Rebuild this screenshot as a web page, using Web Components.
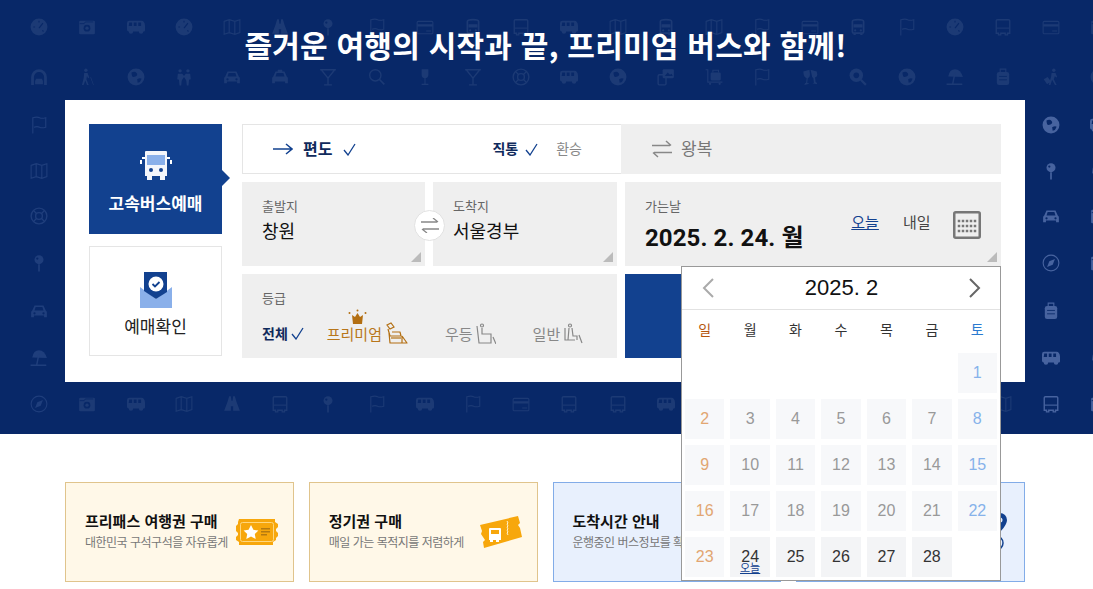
<!DOCTYPE html>
<html lang="ko">
<head>
<meta charset="utf-8">
<title>고속버스 예매</title>
<style>
  html, body { margin: 0; height: 589px; overflow: hidden; background: #fff; }
  body { font-family: "Noto Sans CJK KR", "Noto Sans", sans-serif; color: #111; }
</style>
</head>
<body>
<hero-band>
  <span slot="title">즐거운 여행의 시작과 끝, 프리미엄 버스와 함께!</span>
  <booking-panel>
    <side-tab slot="side" active label="고속버스예매">
      <svg width="34" height="30" viewBox="0 0 34 30"><path d="M1 9h2V6h3v2H3v5H1zM33 9h-2V6h-3v2h3v5h2z" fill="#fff"/><path d="M6 1q0-1 1-1h20q1 0 1 1v24h-2v4h-5v-4H13v4H8v-4H6z" fill="#f4f6fb"/><rect x="8" y="4" width="18" height="10" fill="#8ab0ea"/><circle cx="12" cy="19" r="2" fill="#12418f"/><circle cx="22" cy="19" r="2" fill="#12418f"/></svg>
    </side-tab>
    <side-tab slot="side" label="예매확인">
      <svg width="32" height="36" viewBox="0 0 32 36"><path d="M0 15l16 12 16-12v21H0z" fill="#8ab0ea"/><path d="M4 0h23v20L16 27 4 19z" fill="#12418f"/><circle cx="16" cy="12" r="7.5" fill="#fff"/><path d="M12.500 12l2.500 2.500 4.500-4.500" fill="none" stroke="#12418f" stroke-width="1.800"/></svg>
    </side-tab>
    <trip-bar slot="trip"></trip-bar>
    <place-field slot="from" label="출발지" value="창원"></place-field>
    <place-field slot="to" label="도착지" value="서울경부" swap></place-field>
    <date-field slot="date"></date-field>
    <grade-field slot="grade"></grade-field>
    <cal-popup slot="popup"></cal-popup>
  </booking-panel>
</hero-band>
<promo-strip>
  <promo-card tone="gold" heading="프리패스 여행권 구매" note="대한민국 구석구석을 자유롭게">
    <svg width="42" height="26" viewBox="0 0 42 26"><path d="M3 0h36v3l3 2v3l-2 2v2l2 2v3l-2 2v2l-3 2v3H3v-3l-3-2v-3l2-2v-2l-2-2V7l2-2V3z" fill="#f7a70c"/><rect x="4.500" y="3.500" width="33" height="19" rx="2" fill="none" stroke="#ffd77e"/><path d="M15 6l2.400 4.800 5 .7-3.600 3.500.9 5-4.700-2.500L10.300 20l.9-5-3.600-3.500 5-.7z" fill="#fff"/><path d="M25 9h9v1.500h-9zM25 12h9v1.500h-9zM25 15h6v1.500h-6z" fill="#b57a10"/></svg>
  </promo-card>
  <promo-card tone="gold" heading="정기권 구매" note="매일 가는 목적지를 저렴하게">
    <svg width="42" height="32" viewBox="0 0 42 32"><path d="M0 9L38 0l2 7-2 2 2 3 2 9L4 32l-1-6 2-2-2-3-2-3 1-3z" fill="#f7a70c"/><path d="M27 5l1 2-1 1 1 2-1 1 1 2-1 1 1 2-1 1 1 2" fill="none" stroke="#fff3cf"/><path d="M9 13q0-1 1-1h10q1 0 1 1v11h-2v2h-3v-2h-3v2h-3v-2H9z" fill="#fff"/><rect x="11" y="14" width="8" height="4" fill="#f7a70c"/></svg>
  </promo-card>
  <promo-card tone="blue" heading="도착시간 안내" note="운행중인 버스정보를 확인하세요"></promo-card>
  <promo-card tone="blue">
    <svg width="24" height="40" viewBox="0 0 24 40"><path d="M15 1a7 7 0 0 1 7 7c0 5-7 12-7 12s-7-7-7-12a7 7 0 0 1 7-7z" fill="#12418f"/><circle cx="15" cy="8" r="2.500" fill="#e8f0fd"/><circle cx="11" cy="31" r="7" fill="none" stroke="#12418f" stroke-width="1.500"/></svg>
  </promo-card>
</promo-strip>

<script>
const KR = '"Noto Sans CJK KR", "Noto Sans", sans-serif';
const NAVY = '#082868';

// base: fills an open shadow root from a string
class Piece extends HTMLElement {
  constructor() {
    super();
    this.attachShadow( {mode: 'open'} );
  }
  fill( html ) {
    const template = document.createElement( 'template' );
    template.innerHTML = html;
    this.shadowRoot.appendChild( template.content.cloneNode( true ) );
  }
}

// Background pictograms, 32x32
const ICONS = {
  gauge: `<circle cx="16" cy="16" r="15"/><path d="M16 18l7-9M6 16h3M16 5v3M24 24l-2-2" stroke="${NAVY}" stroke-width="2" fill="none"/>`,
  camera: `<path d="M4 5h24q2 0 2 2v20q0 2-2 2H4q-2 0-2-2V7q0-2 2-2z"/><circle cx="16" cy="18" r="6" fill="${NAVY}"/><circle cx="16" cy="18" r="3"/><path d="M3 10h8l2-3h14" stroke="${NAVY}" stroke-width="1.500" fill="none"/>`,
  van: `<path d="M4 5h22q5 0 6 8v9q0 2-2 2h-1a4 4 0 0 1-8 0H11a4 4 0 0 1-8 0q-3 0-3-3V9q0-4 4-4z"/><path d="M4 8h5v6H3zM12 8h5v6h-5zM20 8h5v6h-5z" fill="${NAVY}"/>`,
  map: `<path d="M2 6l9-3 10 3 9-3v23l-9 3-10-3-9 3zM11 3v23M21 6v23" fill="none" stroke="currentColor" stroke-width="2"/>`,
  binoculars: `<path d="M11 2h3l1 8h2l1-8h3l3 10 6 16H18v-8h-4v8H2l6-16z"/>`,
  pin: `<circle cx="16" cy="10" r="8"/><path d="M14.500 18h3v13h-3z"/><circle cx="13" cy="8" r="2" fill="${NAVY}"/>`,
  flag: `<path d="M5 31V3q8-2 12 0t11 0v17q-7 2-11 0t-10 0" fill="none" stroke="currentColor" stroke-width="2"/>`,
  card: `<rect x="2" y="6" width="28" height="22" rx="2" fill="none" stroke="currentColor" stroke-width="2"/><path d="M2 11h28v4H2zM18 22h9v2h-9z"/>`,
  trainbus: `<path d="M6 6q0-3 10-3t10 3v18q0 3-3 3H9q-3 0-3-3z" fill="none" stroke="currentColor" stroke-width="3"/><path d="M8 11h16v6H8zM8 27h4v3H8zM20 27h4v3h-4z"/><circle cx="11" cy="22" r="2"/><circle cx="21" cy="22" r="2"/>`,
  bus: `<path d="M6 3h20q2 0 2 2v22h-4v3h-4v-3h-8v3H8v-3H4V5q0-2 2-2z" fill="none" stroke="currentColor" stroke-width="2.500"/><path d="M4 17h24v2H4z"/>`,
  car: `<path d="M8 6h16l4 9q2 1 2 3v9h-5v-3H7v3H2v-9q0-2 2-3z"/><path d="M10 9h12l2 6H8z" fill="${NAVY}"/><circle cx="8" cy="20" r="2" fill="${NAVY}"/><circle cx="24" cy="20" r="2" fill="${NAVY}"/>`,
  taxi: `<path d="M12 3h8v3h4l4 9q2 1 2 3v9h-5v-3H7v3H2v-9q0-2 2-3l4-9h4z"/><path d="M10 9h12l2 6H8z" fill="${NAVY}"/>`,
  tunnel: `<path d="M2 30V16a14 14 0 0 1 28 0v14h-5V16a9 9 0 0 0-18 0v14z"/><path d="M11 19h10l2 4v6H9v-6z"/>`,
  walker: `<circle cx="14" cy="4" r="3"/><path d="M11 9h6l3 8-2 1-2-4-1 6 4 10h-3l-3-8-3 8H7l3-12zM23 16l5 14h-1l-5-13z"/>`,
  globe: `<circle cx="16" cy="16" r="15"/><path d="M8 8q6-3 9 1t-2 6-6-1-1-6zM18 20q5-3 8-1l-3 6-4 1z" fill="${NAVY}"/>`,
  people: `<circle cx="9" cy="5" r="3"/><circle cx="23" cy="5" r="3"/><path d="M5 10h8l3 4 3-4h8l1 10-3 1-1 10h-3l-1-9-4-6-4 6-1 9H8L7 21l-3-1z"/>`,
  martini: `<path d="M2 3h28M4 3l12 15L28 3M16 18v11M9 30h14" fill="none" stroke="currentColor" stroke-width="2.500"/>`,
  search: `<circle cx="13" cy="13" r="10" fill="none" stroke="currentColor" stroke-width="2.500"/><path d="M20 20l9 9" stroke="currentColor" stroke-width="3"/>`,
  wine: `<path d="M10 2h12v10a6 6 0 0 1-12 0zM15 18h2v10h5v2H10v-2h5z"/>`,
  buoy: `<circle cx="16" cy="16" r="14" fill="none" stroke="currentColor" stroke-width="2.500"/><circle cx="16" cy="16" r="6" fill="none" stroke="currentColor" stroke-width="2.500"/><path d="M6 6l6 6M26 6l-6 6M6 26l6-6M26 26l-6-6" stroke="currentColor" stroke-width="2.500"/>`,
  photos: `<rect x="10" y="2" width="20" height="16" rx="2"/><rect x="2" y="12" width="14" height="18" rx="2" fill="none" stroke="currentColor" stroke-width="2.500"/><path d="M14 14l5-6 4 4 3-2 2 4z" fill="${NAVY}"/>`,
  cart: `<path d="M1 3h4v22h26" fill="none" stroke="currentColor" stroke-width="2"/><rect x="10" y="8" width="18" height="14" rx="2"/><path d="M14 8V4h10v4" fill="none" stroke="currentColor" stroke-width="2"/><circle cx="9" cy="28" r="2"/><circle cx="26" cy="28" r="2"/>`,
  cheers: `<path d="M4 6l11-3 1 9q0 5-4 6l-1 8 4 2-9 2 1-3 2-1 1-8q-4-1-5-5zM28 6L17 3l2 9q0 5 3 6l1 8-3 1 9 2-1-3-2-1-1-8q4-1 4-5z"/>`,
  zoom: `<circle cx="13" cy="13" r="12"/><circle cx="13" cy="13" r="5" fill="${NAVY}"/><path d="M21 21l9 9" stroke="currentColor" stroke-width="4"/>`,
  umbrella: `<path d="M4 15Q6 2 16 2t14 14z"/><path d="M16 8l-4 20M1 29h28" stroke="currentColor" stroke-width="2.500" fill="none"/>`,
  luggage: `<path d="M11 7V2h10v5" fill="none" stroke="currentColor" stroke-width="2"/><rect x="5" y="7" width="22" height="23" rx="4"/><path d="M9 15h14M9 21h14" stroke="${NAVY}" stroke-width="1.500"/>`,
  traveler: `<circle cx="21" cy="4" r="3"/><path d="M17 9h7l3 7-2 1-2-3-2 6 5 10h-3l-5-9-3 9h-3l4-14zM3 20l7-4 6 8-7 5z"/>`,
  compass: `<circle cx="16" cy="16" r="14" fill="none" stroke="currentColor" stroke-width="2"/><path d="M23 9l-4 10-10 4 4-10z"/>`
};

const PATTERN = [
  [ 'globe', 'gauge', 'camera', 'van', 'gauge', 'map', 'binoculars', 'pin', 'flag', 'card', 'trainbus', 'bus', 'van', 'map', 'trainbus', 'map', 'flag', 'card', 'trainbus', 'flag', 'gauge', 'bus', 'card', 'camera' ],
  [ 'van', 'tunnel', 'walker', 'globe', 'people', 'car', 'taxi', 'martini', 'search', 'wine', 'martini', 'buoy', 'van', 'globe', 'photos', 'cart', 'flag', 'cheers', 'zoom', 'globe', 'umbrella', 'luggage', 'traveler', 'globe' ]
];
const EDGES = [
  [ 'compass', 'flag', 'globe', 'van' ],
  [ 'card', 'map', 'pin', 'people' ],
  [ 'buoy', 'buoy', 'car', 'camera' ],
  [ 'pin', 'pin', 'compass', 'camera' ],
  [ 'car', 'car', 'luggage', 'walker' ],
  [ 'bus', 'umbrella', 'van', 'people' ],
  [ 'map', 'compass', 'bus', 'camera' ]
];
const BOTTOM = { 2: 'camera', 3: 'van', 4: 'map', 5: 'binoculars', 6: 'bus', 7: 'pin', 8: 'flag', 9: 'van', 10: 'flag', 11: 'card', 12: 'bus', 13: 'bus', 14: 'van', 21: 'map' };

class HeroPattern extends Piece {
  connectedCallback() {
    let cells = '';
    const put = ( name, row, col, color ) => {
      cells += `<svg style="grid-row:${row + 1};grid-column:${col + 1};color:${color}" viewBox="0 0 32 32" fill="currentColor">${ICONS[name]}</svg>`;
    };
    const FAINT = '#1c3a75';
    const BRIGHT = '#47639f';
    PATTERN.forEach( ( line, row ) => line.forEach( ( name, col ) => put( name, row, col, FAINT ) ) );
    EDGES.forEach( ( [near, left, right, far], i ) => {
      const row = i + 2;
      put( near, row, 0, FAINT );
      put( left, row, 1, '#1f3e7c' );
      put( right, row, 22, BRIGHT );
      put( far, row, 23, BRIGHT );
    } );
    Object.keys( BOTTOM ).forEach( ( col ) => put( BOTTOM[col], 8, +col, FAINT ) );
    this.fill( `
      <style>
        :host { display: block; position: absolute; inset: 0; overflow: hidden; }
        .grid {
          display: grid;
          grid-template-columns: repeat( 25, 48.2px );
          grid-template-rows: 50px 50px 46px 45px 46px 48px 48px 46px 46px;
          margin: 2px 0 0 -33px;
          place-items: center;
        }
        svg { display: block; height: 18px; width: 18px; }
      </style>
      <div class="grid">${cells}</div>
    ` );
  }
}

class HeroBand extends Piece {
  constructor() {
    super();
    this.fill( `
      <style>
        :host { background: ${NAVY}; display: block; height: 434px; position: relative; }
        h1 {
          align-items: center;
          color: #fff;
          display: flex;
          font-family: ${KR};
          font-size: 30px;
          font-weight: 700;
          height: 88px;
          justify-content: center;
          letter-spacing: 0.24px;
          margin: 0 2px 2px 0;
          position: relative;
          white-space: nowrap;
        }
        .wrap { padding: 10px 68px 0 65px; position: relative; }
      </style>
      <hero-pattern></hero-pattern>
      <h1><slot name="title"></slot></h1>
      <div class="wrap"><slot></slot></div>
    ` );
  }
}

class BookingPanel extends Piece {
  constructor() {
    super();
    this.fill( `
      <style>
        :host {
          background: #fff;
          box-sizing: border-box;
          display: flex;
          gap: 20px;
          height: 282px;
          padding: 24px;
          position: relative;
          width: 960px;
          z-index: 2;
        }
        .side { display: flex; flex: none; flex-direction: column; gap: 12px; width: 133px; }
        .main {
          display: grid;
          flex: 1;
          gap: 8px;
          grid-template-columns: 183px 184px 376px;
          grid-template-rows: 50px 84px 84px;
        }
        .trip { grid-column: 1 / 4; }
        .grade { grid-column: 1 / 3; }
        .go { background: #12418f; }
        ::slotted( cal-popup ) { left: 616px; position: absolute; top: 166px; z-index: 5; }
      </style>
      <div class="side"><slot name="side"></slot></div>
      <div class="main">
        <div class="trip"><slot name="trip"></slot></div>
        <div><slot name="from"></slot></div>
        <div><slot name="to"></slot></div>
        <div><slot name="date"></slot></div>
        <div class="grade"><slot name="grade"></slot></div>
        <div class="go"></div>
      </div>
      <slot name="popup"></slot>
    ` );
  }
}

class SideTab extends Piece {
  connectedCallback() {
    this.fill( `
      <style>
        :host {
          align-items: center;
          border: 1px solid #e5e5e5;
          box-sizing: border-box;
          color: #222;
          display: flex;
          flex-direction: column;
          font-family: ${KR};
          font-size: 17px;
          height: 110px;
          justify-content: center;
          padding-top: 7px;
          position: relative;
          width: 133px;
        }
        :host( [active] ) { background: #12418f; border-color: #12418f; color: #fff; font-weight: 700; }
        :host( [active] )::after {
          border-bottom: 8px solid transparent;
          border-left: 8px solid #12418f;
          border-top: 8px solid transparent;
          content: '';
          left: 132px;
          position: absolute;
          top: 45px;
        }
        span { line-height: 22px; margin-top: 7px; }
        :host( [active] ) span { margin-top: 11px; }
        ::slotted( svg ) { display: block; }
      </style>
      <slot></slot>
      <span>${this.getAttribute( 'label' )}</span>
    ` );
  }
}

const TICK = ( color, w = 13 ) => `<svg width="${w}" height="${w}" viewBox="0 0 13 13"><path d="M1 7l4 5 7-11" fill="none" stroke="${color}" stroke-width="1.300"/></svg>`;

class TripBar extends Piece {
  constructor() {
    super();
    this.fill( `
      <style>
        :host { display: flex; font-family: ${KR}; height: 50px; }
        .one {
          align-items: center;
          border: 1px solid #e5e5e5;
          border-right: none;
          box-sizing: border-box;
          display: flex;
          padding-left: 30px;
          width: 379px;
        }
        .one > b { color: #0f2a5c; font-size: 16px; margin: 0 11px 3px 10px; }
        .kinds { align-items: center; display: flex; font-size: 14px; margin-left: auto; padding-right: 39px; }
        .kinds b { color: #0f2a5c; margin: 0 7px 2px 1px; }
        .kinds span { color: #888; margin: 0 0 2px 18px; }
        .two { align-items: center; background: #efefef; color: #777; display: flex; flex: 1; font-size: 17px; gap: 9px; padding-left: 31px; }
        .two span { margin-bottom: 3px; }
        svg { display: block; }
      </style>
      <div class="one">
        <svg width="20" height="12" viewBox="0 0 20 12"><path d="M0 6h18M13 1l6 5-6 5" fill="none" stroke="#12418f" stroke-width="1.500"/></svg>
        <b>편도</b>${TICK( '#12418f' )}
        <div class="kinds"><b>직통</b>${TICK( '#12418f' )}<span>환승</span></div>
      </div>
      <div class="two">
        <svg width="20" height="18" viewBox="0 0 20 18"><path d="M0 5.500h18M14 1l5 4.500M20 12.500H2M6 17l-5-4.500" fill="none" stroke="#888" stroke-width="1.500"/></svg>
        <span>왕복</span>
      </div>
    ` );
  }
}

const CORNER = `
  .corner {
    border-bottom: 10px solid #bbb;
    border-left: 10px solid transparent;
    bottom: 4px;
    position: absolute;
    right: 4px;
  }
`;

class PlaceField extends Piece {
  connectedCallback() {
    const swap = this.hasAttribute( 'swap' ) ? `
      <div class="swap"><svg width="18" height="15" viewBox="0 0 18 15"><path d="M0 4h16M12 0l5 4M18 11H2M6 15l-5-4" fill="none" stroke="#888" stroke-width="1.300"/></svg></div>` : '';
    this.fill( `
      <style>
        :host {
          background: #efefef;
          box-sizing: border-box;
          display: flex;
          flex-direction: column;
          font-family: ${KR};
          height: 84px;
          padding: 15px 20px 0;
          position: relative;
        }
        small { color: #666; font-size: 13px; line-height: 18px; }
        strong { color: #111; font-size: 18px; font-weight: 400; line-height: 28px; margin-top: 1px; }
        ${CORNER}
        .swap {
          align-items: center;
          background: #fff;
          border: 1px solid #e2e2e2;
          border-radius: 50%;
          box-sizing: border-box;
          display: flex;
          height: 31px;
          justify-content: center;
          left: -19px;
          position: absolute;
          top: 28px;
          width: 31px;
        }
      </style>
      <small>${this.getAttribute( 'label' )}</small>
      <strong>${this.getAttribute( 'value' )}</strong>
      <div class="corner"></div>${swap}
    ` );
  }
}

class DateField extends Piece {
  constructor() {
    super();
    let dots = '';
    for( let y = 10; y <= 20; y += 5 ) {
      for( let x = 6; x <= 22; x += 4 ) {
        dots += `<rect x="${x - 1.25}" y="${y - 1.25}" width="2.5" height="2.5"/>`;
      }
    }
    this.fill( `
      <style>
        :host {
          background: #efefef;
          box-sizing: border-box;
          display: flex;
          font-family: ${KR};
          height: 84px;
          padding: 15px 20px 0;
          position: relative;
        }
        .now { display: flex; flex-direction: column; }
        small { color: #666; font-size: 13px; line-height: 18px; }
        strong { color: #111; font-family: Roboto, ${KR}; font-size: 24px; font-weight: 700; letter-spacing: 0.1px; line-height: 34px; margin-top: 6px; white-space: nowrap; }
        .links { align-items: center; display: flex; font-size: 15px; margin-left: auto; padding: 0 0 14px; }
        u { color: #12418f; margin: 0 24px 7px 0; }
        span { color: #444; margin: 0 22.5px 7px 0; }
        svg { display: block; }
        ${CORNER}
      </style>
      <div class="now"><small>가는날</small><strong>2025. 2. 24. 월</strong></div>
      <div class="links">
        <u>오늘</u><span>내일</span>
        <svg width="28" height="28" viewBox="0 0 28 28" fill="#777"><rect x="1.250" y="1.250" width="25.500" height="25.500" rx="1.500" fill="none" stroke="#777" stroke-width="2.500"/>${dots}</svg>
      </div>
      <div class="corner"></div>
    ` );
  }
}

class GradeField extends Piece {
  constructor() {
    super();
    const GOLD = '#b36f12';
    const GRAY = '#888';
    const line = ( color ) => `fill="none" stroke="${color}" stroke-width="1.200"`;
    const premium = `<svg width="22" height="22" viewBox="0 0 22 22"><path d="M1 3l4-2 3 4-4 2z" ${line( GOLD )}/><path d="M2 7l2 7h11l-1-4H6M3 11l1 10h12v-7M16 14l5 7h-5" ${line( GOLD )} stroke-linejoin="round"/><path d="M5 16h10" ${line( GOLD )}/></svg>`;
    const better = `<svg width="20" height="21" viewBox="0 0 20 21"><circle cx="6" cy="2.500" r="1.500" ${line( GRAY )}/><path d="M1 3l2 17h12v-9H6V5M17 14l3 7" ${line( GRAY )}/></svg>`;
    const basic = `<svg width="19" height="21" viewBox="0 0 19 21"><circle cx="6" cy="2.500" r="1.500" ${line( GRAY )}/><path d="M1 5v12h10M5 5l-1 12M8 5l1 8h4v4M15 12l3 8" ${line( GRAY )}/></svg>`;
    this.fill( `
      <style>
        :host {
          background: #efefef;
          box-sizing: border-box;
          display: flex;
          flex-direction: column;
          font-family: ${KR};
          height: 84px;
          padding: 15px 20px 0;
        }
        small { color: #666; font-size: 13px; line-height: 18px; }
        .list { align-items: center; display: flex; font-size: 15px; height: 26px; margin-top: 13px; white-space: nowrap; }
        .item { align-items: center; display: flex; gap: 3px; position: relative; }
        b { color: #0f2a5c; font-size: 14px; }
        .all { margin-right: 23px; }
        .top { color: #b8761a; gap: 4px; margin-right: 37px; }
        .mid { color: #888; margin-right: 37px; }
        .low { color: #888; gap: 4px; }
        .crown { left: 21px; position: absolute; top: -13px; }
        svg { display: block; }
      </style>
      <small>등급</small>
      <div class="list">
        <div class="item all"><b>전체</b>${TICK( '#12418f' )}</div>
        <div class="item top">
          <svg class="crown" width="19" height="15" viewBox="0 0 19 15" fill="${GOLD}"><path d="M4 6l3 2 2.500-4 2.500 4 3-2-1 9H5z"/><circle cx="9.500" cy="1.500" r="1"/><circle cx="1.500" cy="4" r="1"/><circle cx="17.500" cy="4" r="1"/></svg>
          <span>프리미엄</span>${premium}
        </div>
        <div class="item mid"><span>우등</span>${better}</div>
        <div class="item low"><span>일반</span>${basic}</div>
      </div>
    ` );
  }
}

class CalPopup extends Piece {
  constructor() {
    super();
    const names = [ '일', '월', '화', '수', '목', '금', '토' ];
    const heads = names.map( ( n, i ) => `<div class="head d${i}">${n}</div>` ).join( '' );
    let days = '<i></i>'.repeat( 6 );
    for( let day = 1; day <= 28; day++ ) {
      const dow = ( day + 5 ) % 7;
      const kind = day >= 24 ? 'open' : dow === 0 ? 'sun' : dow === 6 ? 'sat' : 'past';
      const tag = day === 24 ? '<u>오늘</u>' : '';
      days += `<div class="day ${kind}">${day}${tag}</div>`;
    }
    this.fill( `
      <style>
        :host {
          background: #fff;
          border: 1px solid #999;
          box-sizing: border-box;
          display: block;
          height: 315px;
          width: 320px;
        }
        .top {
          align-items: center;
          border-bottom: 1px solid #e2e2e2;
          display: flex;
          font-family: "Liberation Sans", sans-serif;
          font-size: 22px;
          color: #111;
          height: 42px;
          justify-content: space-between;
          padding: 0 19px 0 20px;
        }
        svg { display: block; }
        .grid {
          display: grid;
          gap: 6px;
          grid-template-columns: repeat( 7, 1fr );
          grid-template-rows: 37px repeat( 5, 40px );
          padding: 0 3px;
        }
        .head { align-items: center; color: #333; display: flex; font-family: ${KR}; font-size: 14px; justify-content: center; }
        .d0 { color: #b5560f; }
        .d6 { color: #2b7bd0; }
        .day {
          align-items: center;
          background: #f7f8fa;
          color: #999;
          display: flex;
          font-family: "Liberation Sans", sans-serif;
          font-size: 16px;
          justify-content: center;
          position: relative;
        }
        .sun { color: #e2a672; }
        .sat { color: #86b2ea; }
        .open { background: #f3f4f6; color: #333; }
        u { bottom: 3px; color: #12418f; font-family: ${KR}; font-size: 11px; left: 0; line-height: 14px; position: absolute; right: 0; text-align: center; }
      </style>
      <div class="top">
        <svg width="12" height="20" viewBox="0 0 12 20"><path d="M11 1L2 10l9 9" fill="none" stroke="#aaa" stroke-width="2"/></svg>
        <span>2025. 2</span>
        <svg width="12" height="20" viewBox="0 0 12 20"><path d="M1 1l9 9-9 9" fill="none" stroke="#666" stroke-width="2"/></svg>
      </div>
      <div class="grid">${heads}${days}</div>
    ` );
  }
}

class PromoStrip extends Piece {
  constructor() {
    super();
    this.fill( `
      <style>
        :host {
          display: grid;
          gap: 15px;
          grid-template-columns: repeat( 4, 1fr );
          padding: 48px 68px 0 65px;
        }
      </style>
      <slot></slot>
    ` );
  }
}

class PromoCard extends Piece {
  connectedCallback() {
    const heading = this.getAttribute( 'heading' );
    const copy = heading ? `<h3>${heading}</h3><p>${this.getAttribute( 'note' )}</p>` : '';
    this.fill( `
      <style>
        :host {
          align-items: center;
          box-sizing: border-box;
          border: 1px solid #e0c48c;
          background: #fff8e8;
          display: flex;
          font-family: ${KR};
          height: 100px;
          padding: 0 15px 0 19px;
          white-space: nowrap;
        }
        :host( [tone=blue] ) { background: #e8f0fd; border-color: #82ace8; }
        .copy { flex: 1; min-width: 0; margin-top: -3px; }
        h3 { color: #111; font-size: 15px; font-weight: 700; line-height: 22px; margin: 0; }
        p { color: #777; font-size: 12px; letter-spacing: -0.5px; line-height: 20px; margin: 0; }
        ::slotted( svg ) { display: block; flex: none; }
      </style>
      <div class="copy">${copy}</div>
      <slot></slot>
    ` );
  }
}

customElements.define( 'hero-pattern', HeroPattern );
customElements.define( 'hero-band', HeroBand );
customElements.define( 'booking-panel', BookingPanel );
customElements.define( 'side-tab', SideTab );
customElements.define( 'trip-bar', TripBar );
customElements.define( 'place-field', PlaceField );
customElements.define( 'date-field', DateField );
customElements.define( 'grade-field', GradeField );
customElements.define( 'cal-popup', CalPopup );
customElements.define( 'promo-strip', PromoStrip );
customElements.define( 'promo-card', PromoCard );
</script>
</body>
</html>
